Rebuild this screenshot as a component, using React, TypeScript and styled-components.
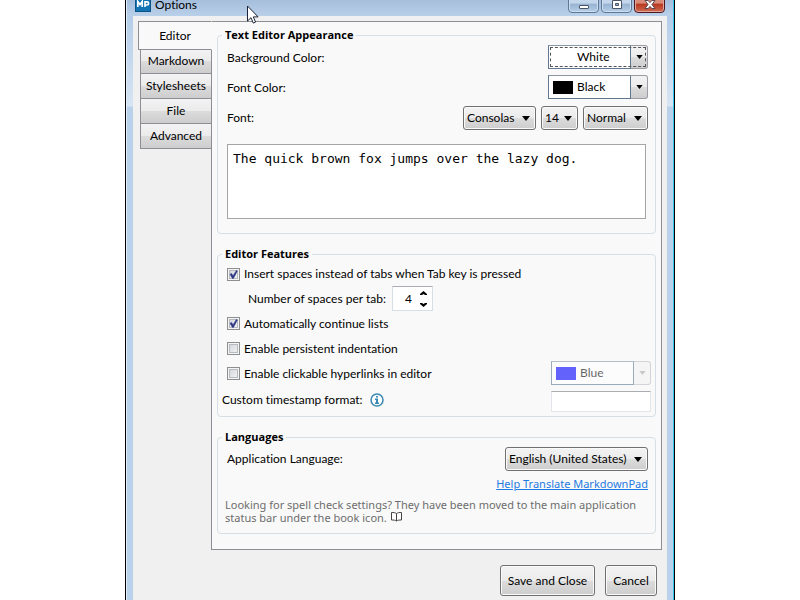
import React, { useState } from "react";
import styled, { createGlobalStyle, css } from "styled-components";

const GlobalStyle = createGlobalStyle`
  *, *::before, *::after { box-sizing: border-box; }
  body {
    margin: 0;
    background: #fff;
    color: #000;
    font: 12px/16px Lato, "Open Sans", sans-serif;
    font-variant-ligatures: none;
  }
  button, input, select, textarea { font: inherit; color: inherit; margin: 0; }
`;

const Desktop = styled.div`
  position: relative;
  display: flex;
  min-height: 100vh;
  padding: 0 125px;
  overflow: hidden;
`;

const Window = styled.main`
  flex: 1;
  min-width: 0;
  display: flex;
  flex-direction: column;
  padding: 0 7px;
  border: solid #000;
  border-width: 0 1px;
  box-shadow: inset 1px 0 #e4eef8, inset -1px 0 #35c5ee;
  background: linear-gradient(#a9c3df 0, #b4cde8 16px, #d7e5f4 106px, #b9d1ea 107px);
`;

const TitleBar = styled.header`
  display: flex;
  justify-content: space-between;
  height: 16px;
  margin: 0 -6px;
  padding: 0 8px;
  overflow: hidden;
  background: linear-gradient(#a5bedb, #b9d0ea);
`;

const TitleName = styled.div`
  display: flex;
  align-items: flex-end;
  gap: 4px;
  height: 12px;
`;

const Title = styled.h1`
  margin: 0 0 2px;
  font-size: 12px;
  font-weight: 400;
  line-height: 10px;
`;

const Logo = styled.svg`
  display: block;
  flex: none;
`;

const Caption = styled.div`
  display: flex;
  align-items: flex-end;
  gap: 2px;
  height: 13px;
`;

const CaptionButton = styled.button<{ $close?: boolean }>`
  display: flex;
  align-items: center;
  justify-content: center;
  width: 31px;
  height: 18px;
  padding: 0;
  border: 1px solid ${(p) => (p.$close ? "#4d1620" : "#5c7899")};
  border-radius: 0 0 4px 4px;
  box-shadow: inset 0 0 0 1px ${(p) => (p.$close ? "#e2a79c" : "#cfdff0")};
  background: ${(p) =>
    p.$close
      ? "linear-gradient(#d98a78 0 45%, #b8361f 50%, #cf6a4f)"
      : "linear-gradient(#c3d6eb 0 45%, #97b3d2 50%, #b5cde8)"};
  svg {
    margin-bottom: -2px;
  }
`;

const Client = styled.div`
  flex: 1;
  padding: 5px 5px 4px;
  background: #f0f0f0;
`;

const Tabbed = styled.div`
  display: flex;
  align-items: stretch;
`;

const TabList = styled.nav`
  flex: none;
  display: flex;
  flex-direction: column;
  align-items: flex-end;
  width: 74px;
  margin-right: -1px;
`;

const Tab = styled.button<{ $active?: boolean }>`
  width: 72px;
  height: 25px;
  padding: 0;
  border: 1px solid #8c8e94;
  border-top: 0;
  text-align: center;
  background: linear-gradient(#f3f3f3, #ebebeb 50%, #dcdcdc 51%, #cdcdcd);
  ${(p) =>
    p.$active &&
    css`
      z-index: 1;
      width: 74px;
      height: 29px;
      margin-bottom: -1px;
      border-top: 1px solid #8c8e94;
      border-right-color: #f9f9f9;
      background: #f9f9f9;
    `}
`;

const Panel = styled.section`
  flex: 1;
  min-width: 0;
  display: flex;
  flex-direction: column;
  gap: 12px;
  padding: 5px 5px 15px;
  border: 1px solid #8c8e94;
  background: #f9f9f9;
`;

const Group = styled.fieldset`
  min-width: 0;
  margin: 0;
  padding: 0 4px;
  border: 1px solid #d5dfe5;
  border-radius: 4px;
`;

const Legend = styled.legend`
  padding: 0 3px;
  font: 700 11px/16px "Open Sans", sans-serif;
`;

const Rows = styled.div`
  display: flex;
  flex-direction: column;
  gap: 5px;
  padding: 2px 3px 14px 5px;
`;

const Row = styled.div`
  display: flex;
  align-items: center;
  justify-content: space-between;
  min-height: 25px;
`;

const Pickers = styled.div`
  display: flex;
  gap: 5px;
  padding-top: 1px;
`;

const ColorBox = styled.div<{ $disabled?: boolean }>`
  position: relative;
  display: grid;
  grid-template-columns: 83px 17px;
  width: 100px;
  height: 24px;
  margin-bottom: 1px;
  opacity: ${(p) => (p.$disabled ? 0.6 : 1)};
`;

const ColorFace = styled.span`
  display: flex;
  align-items: center;
  padding-left: 4px;
  border: 1px solid #5f7890;
  border-top-color: #8996a4;
  background: #fff;
`;

const Swatch = styled.span<{ $color: string }>`
  width: 20px;
  height: 13px;
  background: ${(p) => p.$color};
`;

const ColorArrow = styled.span<{ $disabled?: boolean }>`
  display: flex;
  align-items: center;
  justify-content: center;
  border: 1px solid ${(p) => (p.$disabled ? "#b9bcc2" : "#9a9ca2")};
  border-left: 0;
  border-radius: 0 3px 3px 0;
  color: ${(p) => (p.$disabled ? "#aaa" : "#000")};
  background: ${(p) =>
    p.$disabled ? "#f4f4f4" : "linear-gradient(#f3f3f3, #ebebeb 50%, #dcdcdc 51%, #cdcdcd)"};
`;

const ColorSelect = styled.select`
  position: absolute;
  inset: 0;
  appearance: none;
  padding: 0 17px 0 29px;
  border: 0;
  outline: 0;
  background: none;
  opacity: 1;
`;

const FocusRing = styled.span`
  position: absolute;
  inset: 2px;
  border: 1px dashed #555;
  pointer-events: none;
`;

const Drop = styled.span<{ $width: number }>`
  position: relative;
  display: flex;
  align-items: center;
  width: ${(p) => p.$width}px;
  height: 24px;
  border: 1px solid #707070;
  border-radius: 3px;
  box-shadow: inset 0 0 0 1px #fafafa;
  background: linear-gradient(#f3f3f3, #ebebeb 50%, #dcdcdc 51%, #cdcdcd);

  select {
    flex: 1;
    min-width: 0;
    height: 22px;
    appearance: none;
    padding: 0 0 0 3px;
    border: 0;
    background: none;
  }
  svg {
    position: absolute;
    right: 5px;
    pointer-events: none;
  }
`;

const Sample = styled.textarea`
  display: block;
  height: 75px;
  margin: 9px 2px 0 0;
  padding: 5px;
  border: 1px solid #a5a5a5;
  resize: none;
  background: #fff;
  font: 13px/18px "DejaVu Sans Mono", monospace;
`;

const Features = styled.div`
  padding: 0 0 4px;
`;

const FeatureRow = styled.div<{ $indent?: boolean }>`
  display: flex;
  align-items: center;
  justify-content: space-between;
  height: 25px;
  padding-left: 5px;
  &:first-child {
    height: 24px;
  }
  ${(p) =>
    p.$indent &&
    css`
      justify-content: flex-start;
      gap: 6px;
      padding-left: 26px;
    `}
`;

const CheckLabel = styled.label`
  display: flex;
  align-items: center;
  gap: 4px;
`;

const Check = styled.input`
  appearance: none;
  width: 13px;
  height: 13px;
  border: 1px solid #8e8f8f;
  box-shadow: inset 0 0 0 1px #f4f4f4, inset 0 0 0 2px #b6bbc2;
  background: linear-gradient(135deg, #cfd2d8, #f6f6f6);
`;

const CheckSlot = styled.span`
  position: relative;
  display: flex;
  svg {
    position: absolute;
    inset: 0;
    pointer-events: none;
  }
`;

const Spinner = styled.span`
  display: flex;
  align-items: center;
  width: 41px;
  height: 25px;
  padding-right: 4px;
  border: 1px solid #d5dfe5;
  border-top-color: #abadb3;
  background: #fff;
  input {
    flex: 1;
    min-width: 0;
    padding: 0 7px 0 0;
    border: 0;
    background: none;
    text-align: right;
  }
`;

const SpinButtons = styled.span`
  display: flex;
  flex-direction: column;
  gap: 1px;
  button {
    display: flex;
    align-items: center;
    justify-content: center;
    width: 9px;
    height: 10px;
    padding: 0;
    border: 0;
    background: none;
  }
`;

const StampRow = styled.div`
  display: flex;
  align-items: center;
  gap: 7px;
  margin-top: 5px;
  svg {
    flex: none;
    margin-bottom: 4px;
  }
  label {
    padding-bottom: 3px;
  }
`;

const StampInput = styled.input`
  width: 100px;
  height: 21px;
  margin-left: auto;
  border: 1px solid #e2e5ea;
  border-top-color: #abadb3;
  background: #fff;
`;

const Language = styled.div`
  padding: 2px 3px 9px;
  ${Row} {
    min-height: 24px;
    padding-left: 2px;
  }
`;

const LinkLine = styled.div`
  margin-top: 5px;
  font: 11px/16px "Noto Sans", sans-serif;
  text-align: right;
  a {
    color: #1f7ae0;
    text-decoration: underline;
  }
`;

const Hint = styled.p`
  margin: 6px 0 0;
  color: #6d6d6d;
  font: 11px/13px "Noto Sans", sans-serif;
  svg {
    margin-left: 4px;
    vertical-align: 0;
  }
`;

const Footer = styled.footer`
  display: flex;
  justify-content: flex-end;
  gap: 10px;
  padding: 15px 5px 0 0;
`;

const PushButton = styled.button<{ $wide?: boolean }>`
  min-width: ${(p) => (p.$wide ? 95 : 52)}px;
  height: 31px;
  padding: 0 6px;
  border: 1px solid #707070;
  border-radius: 3px;
  box-shadow: inset 0 0 0 1px #fafafa;
  background: linear-gradient(#f3f3f3, #ebebeb 50%, #dcdcdc 51%, #cdcdcd);
`;

const Pointer = styled.svg`
  position: absolute;
  left: 247px;
  top: 5px;
  pointer-events: none;
`;

const Arrow = ({ small }: { small?: boolean }) => (
  <svg width={small ? 7 : 8} height={small ? 4 : 5} viewBox="0 0 8 5" aria-hidden="true">
    <path d="M0 0h8L4 5z" fill="currentColor" />
  </svg>
);

const Tick = () => (
  <svg width="13" height="13" viewBox="0 0 13 13" aria-hidden="true">
    <path
      d="M3 6.2 4.6 5.4 6 7.8 9.4 2.4 10.4 3 6.4 10.4H5.4z"
      fill="#2f3784"
      stroke="#2f3784"
      strokeWidth=".5"
    />
  </svg>
);

function ColorPicker(props: {
  id: string;
  label?: string;
  name: string;
  color: string;
  focused?: boolean;
  disabled?: boolean;
}) {
  return (
    <ColorBox $disabled={props.disabled}>
      <ColorFace>
        <Swatch $color={props.color} />
      </ColorFace>
      <ColorArrow $disabled={props.disabled}>
        <Arrow small />
      </ColorArrow>
      <ColorSelect id={props.id} aria-label={props.label} disabled={props.disabled}>
        <option>{props.name}</option>
      </ColorSelect>
      {props.focused && <FocusRing />}
    </ColorBox>
  );
}

function DropDown(props: { id?: string; label?: string; value: string; width: number }) {
  return (
    <Drop $width={props.width}>
      <select id={props.id} aria-label={props.label}>
        <option>{props.value}</option>
      </select>
      <Arrow />
    </Drop>
  );
}

function Option(props: { label: string; initial?: boolean }) {
  const [on, setOn] = useState(!!props.initial);
  return (
    <CheckLabel>
      <CheckSlot>
        <Check type="checkbox" checked={on} onChange={() => setOn(!on)} />
        {on && <Tick />}
      </CheckSlot>
      {props.label}
    </CheckLabel>
  );
}

const TABS = ["Editor", "Markdown", "Stylesheets", "File", "Advanced"];

export default function App() {
  const [spaces, setSpaces] = useState(4);
  return (
    <>
      <GlobalStyle />
      <Desktop>
        <Window>
          <TitleBar>
            <TitleName>
              <Logo width="16" height="16" viewBox="0 0 16 16" aria-hidden="true">
                <rect x=".5" y=".5" width="15" height="15" fill="#1273b5" stroke="#0b5488" />
                <path
                  d="M2.8 11V5.5l2.200 3 2.200-3V11M10 11V5.800h2a1.600 1.600 0 0 1 0 3.200h-2"
                  fill="none"
                  stroke="#fff"
                  strokeWidth="1.7"
                />
              </Logo>
              <Title>Options</Title>
            </TitleName>
            <Caption>
              <CaptionButton aria-label="Minimize">
                <svg width="12" height="12" viewBox="0 0 12 12">
                  <rect x="1.5" y="6.5" width="9" height="3" rx=".5" fill="#fff" stroke="#4a5568" />
                </svg>
              </CaptionButton>
              <CaptionButton aria-label="Maximize">
                <svg width="12" height="12" viewBox="0 0 12 12">
                  <path
                    d="M1.5 1.5h9v8h-9zM4.5 4.5v2h3v-2z"
                    fill="#fff"
                    fillRule="evenodd"
                    stroke="#4a5568"
                  />
                </svg>
              </CaptionButton>
              <CaptionButton $close aria-label="Close">
                <svg width="12" height="12" viewBox="0 0 12 12">
                  <path
                    d="M1 1.5h3.200L6 3.600l1.800-2.100H11L8 5.500l3 4H7.800L6 7.400 4.200 9.500H1l3-4z"
                    fill="#fff"
                    stroke="#5a4450"
                  />
                </svg>
              </CaptionButton>
            </Caption>
          </TitleBar>

          <Client>
            <Tabbed>
              <TabList>
                {TABS.map((t, i) => (
                  <Tab key={t} $active={i === 0}>
                    {t}
                  </Tab>
                ))}
              </TabList>

              <Panel>
                <Group>
                  <Legend>Text Editor Appearance</Legend>
                  <Rows>
                    <Row>
                      <label htmlFor="bg">Background Color:</label>
                      <ColorPicker id="bg" name="White" color="#fff" focused />
                    </Row>
                    <Row>
                      <label htmlFor="fg">Font Color:</label>
                      <ColorPicker id="fg" name="Black" color="#000" />
                    </Row>
                    <Row>
                      <label htmlFor="font">Font:</label>
                      <Pickers>
                        <DropDown id="font" value="Consolas" width={73} />
                        <DropDown label="Font size" value="14" width={37} />
                        <DropDown label="Font style" value="Normal" width={65} />
                      </Pickers>
                    </Row>
                    <Sample
                      aria-label="Sample text"
                      defaultValue="The quick brown fox jumps over the lazy dog."
                    />
                  </Rows>
                </Group>

                <Group>
                  <Legend>Editor Features</Legend>
                  <Features>
                    <FeatureRow>
                      <Option label="Insert spaces instead of tabs when Tab key is pressed" initial />
                    </FeatureRow>
                    <FeatureRow $indent>
                      <label htmlFor="spaces">Number of spaces per tab:</label>
                      <Spinner>
                        <input
                          id="spaces"
                          value={spaces}
                          onChange={(e) => setSpaces(Number(e.target.value) || 0)}
                        />
                        <SpinButtons>
                          <button aria-label="More spaces" onClick={() => setSpaces(spaces + 1)}>
                            <svg width="7" height="5" viewBox="0 0 7 5">
                              <path d="M3.5 0 7 3v1H5L3.5 3 2 4H0V3z" />
                            </svg>
                          </button>
                          <button aria-label="Fewer spaces" onClick={() => setSpaces(spaces - 1)}>
                            <svg width="7" height="5" viewBox="0 0 7 5">
                              <path d="M3.5 5 7 2V1H5L3.5 2 2 1H0v1z" />
                            </svg>
                          </button>
                        </SpinButtons>
                      </Spinner>
                    </FeatureRow>
                    <FeatureRow>
                      <Option label="Automatically continue lists" initial />
                    </FeatureRow>
                    <FeatureRow>
                      <Option label="Enable persistent indentation" />
                    </FeatureRow>
                    <FeatureRow>
                      <Option label="Enable clickable hyperlinks in editor" />
                      <ColorPicker id="link" label="Hyperlink color" name="Blue" color="#00f" disabled />
                    </FeatureRow>
                    <StampRow>
                      <label htmlFor="stamp">Custom timestamp format:</label>
                      <svg width="14" height="14" viewBox="0 0 14 14" aria-hidden="true">
                        <circle cx="7" cy="7" r="6" fill="#fff" stroke="#3a87b3" strokeWidth="1.5" />
                        <path d="M6 3h2v1.600H6zM5 5.600h3V9.600h1V11H5V9.600h1V7H5z" fill="#3a87b3" />
                      </svg>
                      <StampInput id="stamp" type="text" />
                    </StampRow>
                  </Features>
                </Group>

                <Group>
                  <Legend>Languages</Legend>
                  <Language>
                    <Row>
                      <label htmlFor="lang">Application Language:</label>
                      <DropDown id="lang" value="English (United States)" width={143} />
                    </Row>
                    <LinkLine>
                      <a href="#translate">Help Translate MarkdownPad</a>
                    </LinkLine>
                    <Hint>
                      Looking for spell check settings? They have been moved to the main application
                      status bar under the book icon.
                      <svg width="11" height="10" viewBox="0 0 11 10" aria-hidden="true">
                        <path
                          d="M5.5 1.5C4.500.700 2.500.500.500.500v7.500c2 0 4 .1 5 1 1-.9 3-1 5-1V.500c-2 0-4 .2-5 1zV9"
                          fill="#fff"
                          stroke="#444"
                        />
                      </svg>
                    </Hint>
                  </Language>
                </Group>
              </Panel>
            </Tabbed>

            <Footer>
              <PushButton $wide>Save and Close</PushButton>
              <PushButton>Cancel</PushButton>
            </Footer>
          </Client>
        </Window>

        <Pointer width="12" height="19" viewBox="0 0 12 19" aria-hidden="true">
          <path
            d="M.5 1v15L4 12.700l2.300 5.400 2.300-1-2.300-5.200h4.800z"
            fill="#fff"
            stroke="#1b2436"
          />
        </Pointer>
      </Desktop>
    </>
  );
}
